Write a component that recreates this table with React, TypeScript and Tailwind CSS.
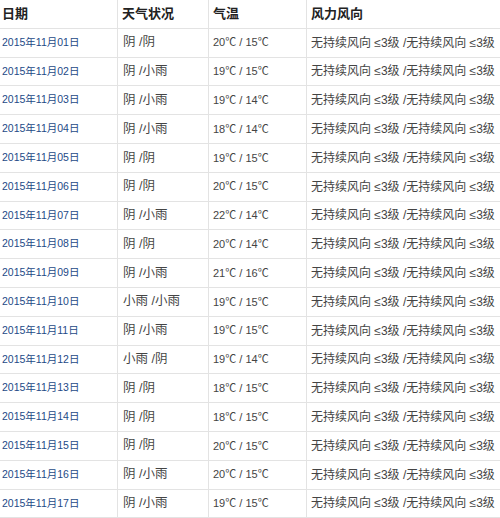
const rows: [string, string, string, string][] = [
  ["01", "阴 /阴", "20", "15"],
  ["02", "阴 /小雨", "19", "15"],
  ["03", "阴 /小雨", "19", "14"],
  ["04", "阴 /小雨", "18", "14"],
  ["05", "阴 /阴", "19", "15"],
  ["06", "阴 /阴", "20", "15"],
  ["07", "阴 /小雨", "22", "14"],
  ["08", "阴 /阴", "20", "14"],
  ["09", "阴 /小雨", "21", "16"],
  ["10", "小雨 /小雨", "19", "15"],
  ["11", "阴 /小雨", "19", "15"],
  ["12", "小雨 /阴", "19", "14"],
  ["13", "阴 /阴", "18", "15"],
  ["14", "阴 /阴", "18", "15"],
  ["15", "阴 /阴", "20", "15"],
  ["16", "阴 /小雨", "20", "15"],
  ["17", "阴 /小雨", "19", "15"],
];

const cell = "flex items-center h-[28.8px] border-b border-[#e3e3e3] whitespace-nowrap overflow-hidden";

export default function App() {
  return (
    <div
      className="w-[500px] h-[518px] overflow-hidden bg-white"
      style={{ fontFamily: '"Liberation Sans", "Noto Sans CJK SC", sans-serif' }}
    >
      <div className="grid grid-cols-[118px_91px_98px_1fr]">
        {/* header */}
        <div className={`${cell} pl-[2px] border-r text-[13px] font-bold text-[#222]`}>日期</div>
        <div className={`${cell} pl-[4px] border-r text-[13px] font-bold text-[#222]`}>天气状况</div>
        <div className={`${cell} pl-[4px] border-r text-[13px] font-bold text-[#222]`}>气温</div>
        <div className={`${cell} pl-[4px] text-[13px] font-bold text-[#222]`}>风力风向</div>

        {rows.map(([day, weather, hi, lo]) => (
          <div key={day} className="contents">
            <div className={`${cell} pl-[2px] border-r text-[10.5px] text-[#1d4a87]`}>
              2015年11月{day}日
            </div>
            <div className={`${cell} pl-[5px] border-r text-[12.5px] text-[#444]`}>{weather}</div>
            <div className={`${cell} pl-[4px] border-r text-[11px] text-[#444]`}>
              {hi}℃ / {lo}℃
            </div>
            <div className={`${cell} pl-[4px] text-[12px] text-[#444]`}>
              无持续风向 ≤3级 /无持续风向 ≤3级
            </div>
          </div>
        ))}
      </div>
    </div>
  );
}
